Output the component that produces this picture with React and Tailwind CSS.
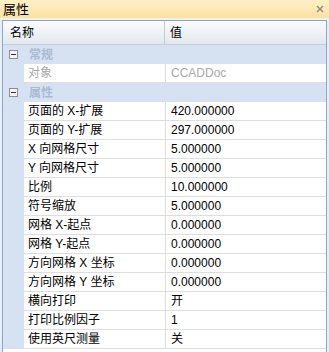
import React from "react";

const rows = [
  ["页面的 X-扩展", "420.000000"],
  ["页面的 Y-扩展", "297.000000"],
  ["X 向网格尺寸", "5.000000"],
  ["Y 向网格尺寸", "5.000000"],
  ["比例", "10.000000"],
  ["符号缩放", "5.000000"],
  ["网格 X-起点", "0.000000"],
  ["网格 Y-起点", "0.000000"],
  ["方向网格 X 坐标", "0.000000"],
  ["方向网格 Y 坐标", "0.000000"],
  ["横向打印", "开"],
  ["打印比例因子", "1"],
  ["使用英尺测量", "关"],
];

function MinusBox() {
  return (
    <svg width="9" height="9" viewBox="0 0 9 9">
      <rect x="0.5" y="0.5" width="8" height="8" fill="#f4f4f4" stroke="#8e8e8e" />
      <rect x="2" y="4" width="5" height="1" fill="#333" />
    </svg>
  );
}

function GroupRow({ label }) {
  return (
    <div className="flex h-[19px] items-center bg-[#d6e2f2]">
      <div className="w-[22px] flex items-center justify-center pr-[1px]">
        <MinusBox />
      </div>
      <span className="pl-[4px] font-bold text-[#a9bbd3]">{label}</span>
    </div>
  );
}

function DataRow({ name, value, muted }) {
  return (
    <div className="flex h-[19px]">
      <div className="w-[21px] bg-[#d6e2f2]" />
      <div
        className={`w-[142px] flex items-center pl-[4px] bg-white border-b border-r border-[#dedede] ${
          muted ? "text-[#a8a8a8]" : "text-black"
        }`}
      >
        {name}
      </div>
      <div
        className={`flex-1 flex items-center pl-[5px] bg-white border-b border-[#dedede] ${
          muted ? "text-[#a8a8a8]" : "text-black"
        }`}
      >
        {value}
      </div>
    </div>
  );
}

export default function App() {
  return (
    <div
      className="w-[329px] h-[352px] overflow-hidden bg-[#e6eef8] text-[12px] leading-none"
      style={{ fontFamily: '"Liberation Sans", "Noto Sans CJK SC", sans-serif' }}
    >
      <div className="h-[18px] flex items-center justify-between pl-[3px] pr-[5px] bg-gradient-to-b from-[#fdf0c6] to-[#fbe2a0]">
        <span className="text-[13px] text-black">属性</span>
        <svg width="8" height="8" viewBox="0 0 8 8">
          <path d="M1 1L7 7M7 1L1 7" stroke="#8a8a8a" strokeWidth="1.4" />
        </svg>
      </div>
      <div className="h-[2px] bg-[#eaf1fa]" />
      <div className="mx-[2px] h-[332px] border-x border-t border-[#8fa6c6] bg-white">
        <div className="flex h-[24px] border-b border-[#c5cdd8] bg-gradient-to-b from-[#fbfcfd] to-[#e2e8ef]">
          <div className="w-[162px] flex items-center pl-[7px] border-r border-[#c3cad4]">名称</div>
          <div className="flex-1 flex items-center pl-[5px]">值</div>
        </div>
        <GroupRow label="常规" />
        <DataRow name="对象" value="CCADDoc" muted />
        <GroupRow label="属性" />
        {rows.map(([n, v]) => (
          <DataRow key={n} name={n} value={v} />
        ))}
      </div>
    </div>
  );
}
